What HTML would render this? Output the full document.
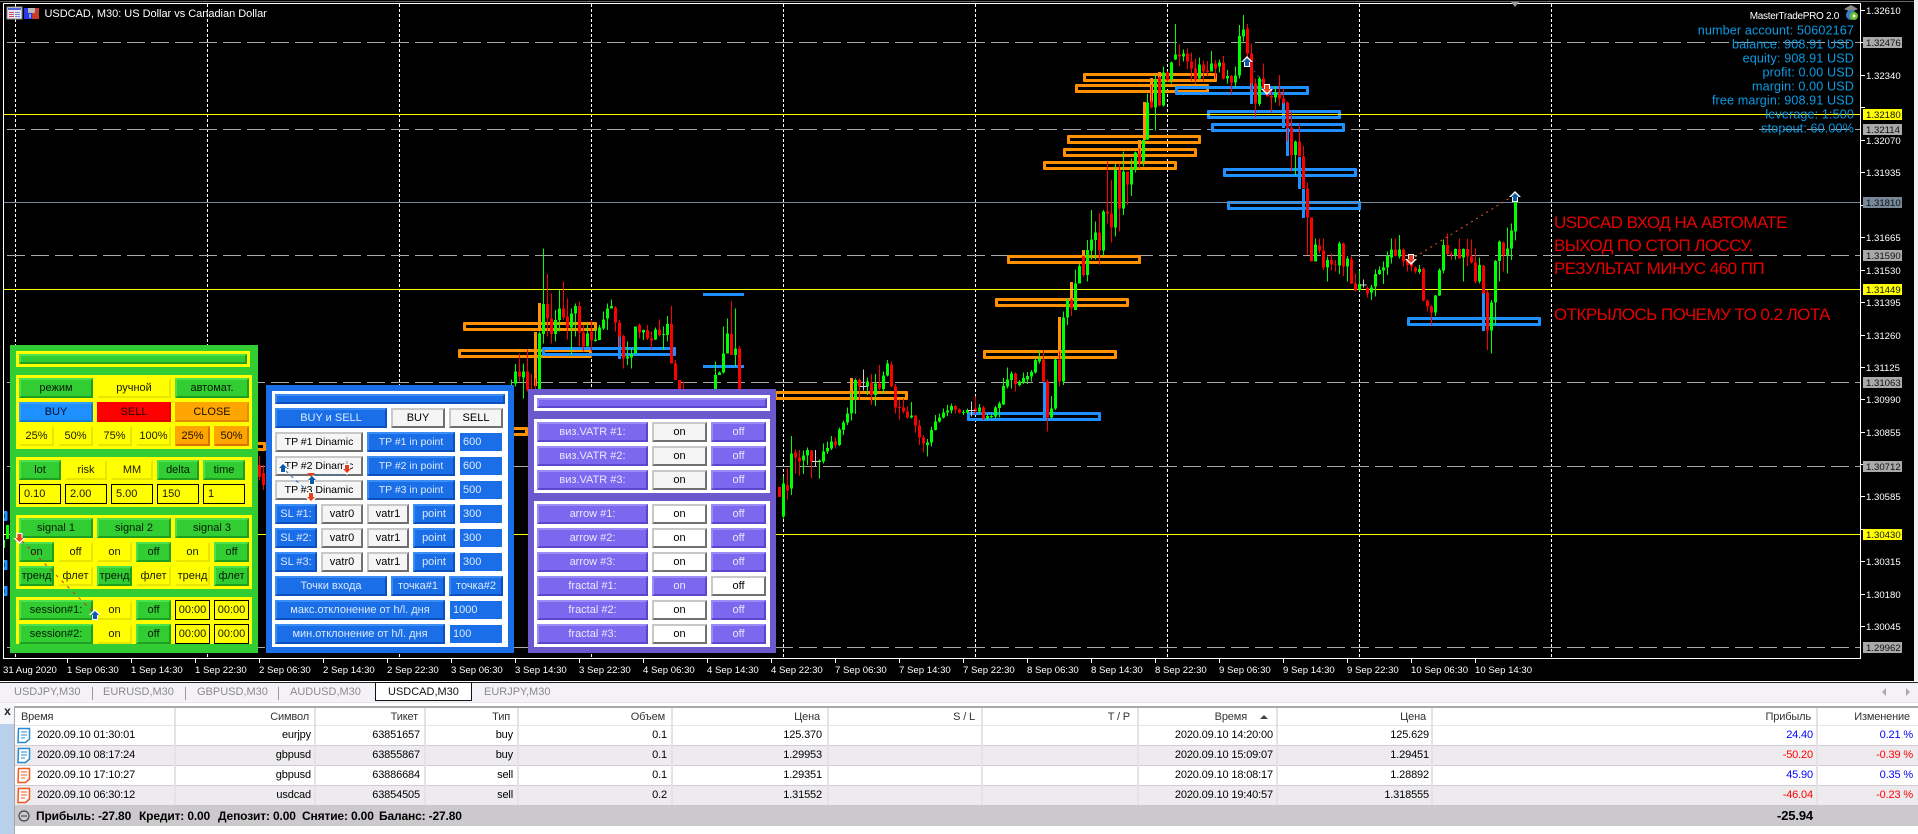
<!DOCTYPE html>
<html><head><meta charset="utf-8"><title>USDCAD,M30</title>
<style>
html,body{margin:0;padding:0;width:1918px;height:834px;overflow:hidden;background:#fff;font-family:"Liberation Sans","Noto Sans CJK SC",sans-serif}
.a{position:absolute}
svg{position:absolute;left:0;top:0}
svg text{font-family:"Liberation Sans","Noto Sans CJK SC",sans-serif}
.b{position:absolute;box-sizing:border-box;border-style:solid;border-width:2px;height:20px;font-size:11px;line-height:16px;text-align:center;white-space:nowrap;overflow:hidden;color:#000}
.tp{font-size:10.5px}
.g{background:#32cd32;border-color:#4be24b #1f9f1f #1f9f1f #4be24b;color:#041a04}
.y{background:#ff0;border-color:#ff0 #e6e600 #e6e600 #ff0;color:#1a1a00}
.bu{background:#1e90ff;border-color:#35a0ff #1878d8 #1878d8 #35a0ff;color:#00102a}
.r{background:#f00;border-color:#f00 #e00000 #e00000 #f00;color:#200}
.o{background:#ffa500;border-color:#ffa500 #e68a00 #e68a00 #ffa500;color:#201000}
.o2{background:#ffa500;border-color:#ffa500 #e07000 #e07000 #ffa500;color:#201000}
.e{position:absolute;box-sizing:border-box;border:1px solid #000;background:#ff0;height:20px;font-size:11px;line-height:18px;color:#1a1a00;white-space:nowrap}
.w{background:#f5f5f5;border-color:#c8c8c8 #707070 #707070 #c8c8c8}
.wh{background:#fff;border-color:#c8c8c8 #707070 #707070 #c8c8c8}
.u{background:#1a6fe8;border-color:#3b8cf5 #0a50c0 #0a50c0 #3b8cf5;color:#dbe9ff}
.ue{position:absolute;box-sizing:border-box;background:#1a6fe8;height:18px;font-size:11px;line-height:18px;color:#dbe9ff;padding-left:3px;white-space:nowrap}
.p{background:#7b68ee;border-color:#9a8cf7 #5a46cf #5a46cf #9a8cf7;color:#ebe7ff}
.row{position:absolute;left:15px;width:1903px;height:20px;font-size:11px;line-height:20px;color:#000}
.row span{position:absolute;top:0;white-space:nowrap;letter-spacing:-.15px}
.cs{position:absolute;width:2px;background:#e4e2e6}
.tb{position:absolute;top:685px;font-size:11px;line-height:14px;color:#8a8a8a;white-space:nowrap}
</style></head><body>

<svg width="1918" height="684" viewBox="0 0 1918 684">
<defs>
<clipPath id="pl"><rect x="4" y="4" width="1856" height="654"/></clipPath>
<g id="au"><polygon points="0,-6 6,0 3,0 3,5 -3,5 -3,0 -6,0" fill="#fff"/><polygon points="0,-4 4,0 2,0 2,4 -2,4 -2,0 -4,0" fill="#0b5aa8"/></g>
<g id="ad"><polygon points="0,6 6,0 3,0 3,-5 -3,-5 -3,0 -6,0" fill="#fff"/><polygon points="0,4 4,0 2,0 2,-4 -2,-4 -2,0 -4,0" fill="#e8401c"/></g>
</defs>
<rect width="1918" height="681" fill="#000"/>
<rect x="0" y="1" width="1914" height="1" fill="#666"/>
<g clip-path="url(#pl)" shape-rendering="crispEdges">
<path fill="none" stroke="#fff" stroke-dasharray="3 2" d="M15.5 4V658M207.5 4V658M399.5 4V658M591.5 4V658M783.5 4V658M975.5 4V658M1167.5 4V658M1359.5 4V658M1551.5 4V658"/>
<path fill="none" stroke="#a6a6a6" stroke-dasharray="18 6" stroke-dashoffset="-3" d="M4 42.5H1860M4 129.5H1860M4 255.5H1860M4 382.5H1860M4 466.5H1860M4 647.5H1860"/>
<g fill="none" stroke="#ff9000" stroke-width="3" stroke-linejoin="round">
<rect x="1084.5" y="74.5" width="131" height="6"/><rect x="1076.5" y="85.5" width="131" height="6"/><rect x="1068.5" y="136.5" width="131" height="6"/><rect x="1064.5" y="149.5" width="131" height="6"/><rect x="1044.5" y="162.5" width="131" height="6"/><rect x="1008.5" y="256.5" width="131" height="6"/><rect x="996.5" y="299.5" width="131" height="6"/><rect x="984.5" y="351.5" width="131" height="6"/><rect x="775.5" y="392.5" width="131" height="6"/><rect x="464.5" y="323.5" width="131" height="6"/><rect x="459.5" y="350.5" width="131" height="6"/><rect x="395.5" y="428.5" width="131" height="6"/><rect x="133.5" y="443.5" width="131" height="6"/>
<path d="M1144.5 102V140M1139.5 140V163M1151.5 78V106M1159.5 72V82M1083.5 250V275M1071.5 282V308M1059.5 317V358M851.5 378V400M539.5 303V331M535.5 332V386"/>
</g>
<g fill="none" stroke="#1e90ff" stroke-width="3" stroke-linejoin="round">
<rect x="1176.5" y="87.5" width="131" height="6"/><rect x="1208.5" y="111.5" width="131" height="6"/><rect x="1212.5" y="124.5" width="131" height="6"/><rect x="1224.5" y="169.5" width="131" height="6"/><rect x="1228.5" y="202.5" width="131" height="6"/><rect x="1408.5" y="318.5" width="131" height="6"/><rect x="968.5" y="413.5" width="131" height="6"/><rect x="543.5" y="348.5" width="131" height="6"/>
<rect x="-125" y="512.5" width="131" height="7"/><rect x="-125" y="561.5" width="131" height="7"/><rect x="-125" y="587.5" width="131" height="7"/>
<path d="M703 294.5H744M703 366.5H744M1044.5 382V420M1251.5 83V104M1283.5 102V128M1287.5 128V156M1299.5 157V189M1303.5 189V218M1483.5 292V331M619.5 335V359"/>
</g>
<path fill="none" stroke="#ff0" d="M4 114.5H1860M4 289.5H1860M4 534.5H1860"/>
<path fill="none" stroke="#778899" d="M4 202.5H1860"/>

<!-- candles region 1 -->
<g transform="translate(440 240) scale(.33333)" fill="none">
<path stroke="#0f0" stroke-width="3" d="M214 418V435M226 372V440M250 370V475M298 275V450M310 25V310M346 210V305M358 150V275M394 205V345M406 190V290M442 250V320M466 265V305M478 255V300M490 215V270M502 190V270M514 178V205M562 305V375M574 325V385M586 260V340M610 268V300M646 262V300M670 260V330M682 228V305M826 365V470M838 395V405M850 260V400M862 235V340M886 205V380"/>
<path stroke="#0f0" stroke-width="9" d="M226 395V430M250 395V412M298 280V450M310 192V282M346 240V282M358 205V240M394 220V262M406 198V220M442 280V320M466 298V303M478 262V300M490 238V266M502 205V236M514 198V205M562 350V355M574 342V352M586 260V340M610 270V278M646 268V298M670 282V285M682 252V285M826 405V460M838 398V405M850 340V397M862 280V340M886 325V345"/>
<path stroke="#f00" stroke-width="3" d="M238 340V425M262 328V455M274 402V450M286 415V450M322 102V290M334 160V310M370 124V240M382 175V298M418 185V320M430 255V335M454 240V335M526 198V275M538 240V320M550 285V385M598 250V295M622 255V300M634 275V325M658 238V290M694 198V370M706 360V420M718 420V460M730 425V460M874 183V345M898 318V450"/>
<path stroke="#f00" stroke-width="9" d="M238 395V410M262 395V450M322 192V235M334 235V282M370 205V232M382 230V262M418 198V278M430 278V320M454 275V302M526 202V248M538 248V290M550 288V355M598 255V278M622 270V295M634 295V302M658 268V285M694 252V370M706 370V420M718 420V460M874 282V345M898 325V450"/>
</g>

<!-- candles region 2 -->
<g transform="translate(780 200) scale(.33333)" fill="none">
<path stroke="#0f0" stroke-width="3" d="M10 830V955M34 708V885M70 752V822M82 742V795M118 778V835M130 730V790M142 725V762M154 708V750M178 682V738M190 662V705M202 622V675M214 578V662M226 535V642M262 532V585M286 522V618M310 515V582M322 480V530M394 606V655M442 717V770M454 680V740M466 645V692M478 640V668M490 625V655M502 615V648M514 610V640M550 630V645M562 625V642M598 612V640M622 640V660M634 640V655M646 618V655M658 605V652M670 534V615M682 502V565M694 515V565M718 540V560M730 518V552M742 516V552M754 510V545M766 475V520M778 450V490M814 588V655M826 475V630M850 335V555M862 295V375"/>
<path stroke="#0f0" stroke-width="9" d="M10 850V950M34 760V866M70 766V782M82 750V766M118 782V786M130 754V785M142 744V755M154 724V746M178 688V735M190 667V690M202 640V668M214 600V640M226 540V598M262 545V560M286 550V585M310 526V567M322 490V527M394 646V653M442 727V735M454 690V728M466 664V690M478 652V665M490 637V652M502 632V638M514 618V632M550 636V639M562 630V638M598 622V634M622 648V656M634 648V651M646 622V650M658 610V624M670 558V614M682 538V560M694 520V540M718 545V555M730 534V548M742 528V538M754 516V530M766 480V518M778 476V484M814 625V652M826 478V626M850 352V545M862 300V352"/>
<path stroke="#f00" stroke-width="3" d="M22 805V900M46 748V820M58 750V828M94 750V835M166 712V745M238 535V600M274 522V615M298 495V570M334 485V562M346 552V640M358 598V660M370 595V640M382 620V655M406 645V698M418 660V735M430 705V758M526 615V640M538 625V640M586 590V642M610 618V660M706 518V575M790 450V545M802 538V695M838 455V560M874 295V348"/>
<path stroke="#f00" stroke-width="9" d="M22 858V872M46 757V772M58 772V785M94 752V785M166 724V735M238 540V560M274 548V585M298 550V565M334 493V560M346 560V622M358 621V624M370 622V635M382 635V652M406 647V676M418 676V712M430 712V731M526 618V628M538 628V638M586 625V634M610 622V656M706 520V552M790 478V545M802 545V652M838 478V545M874 300V325"/>
<path stroke="#cfcfcf" stroke-width="3" d="M106 750V800M250 508V572M574 605V650M96 784H118M240 560H262M564 632H586"/>
</g>

<!-- candles region 3 -->
<g transform="translate(1000 0) scale(.33333)" fill="none">
<path stroke="#0f0" stroke-width="3" d="M226 808V930M238 792V850M262 720V845M274 630V778M286 665V778M310 630V768M346 492V710M370 455V645M394 475V588M406 455V518M430 418V500M442 280V420M466 225V392M490 200V320M514 185V250M526 72V180M550 148V185M598 172V238M634 153V215M658 178V218M682 210V250M706 200V262M718 75V235M730 45V125M778 230V318M826 258V308M886 422V525M946 716V785M982 770V845M1018 725V822M1042 768V845M1078 812V872M1114 855V900M1126 808V890M1138 800V825M1150 785V852M1162 755V825M1174 715V790M1198 705V775"/>
<path stroke="#0f0" stroke-width="9" d="M226 850V930M238 798V850M262 750V825M274 718V752M286 697V720M310 634V752M346 510V683M370 515V625M394 505V553M406 458V508M430 420V485M442 308V418M466 238V322M490 218V316M514 188V238M526 163V178M550 160V170M598 193V236M634 190V215M658 187V200M682 228V236M706 226V248M718 108V226M730 88V110M778 235V312M826 278V292M886 425V465M946 733V785M982 780V802M1018 730V796M1042 775V800M1078 852V870M1114 862V878M1126 822V860M1138 810V822M1150 802V812M1162 768V803M1174 748V772M1198 748V770"/>
<path stroke="#f00" stroke-width="3" d="M250 768V830M298 640V795M322 485V670M334 540V728M358 492V695M382 515V615M418 445V505M454 255V325M478 230V320M502 215V245M538 133V198M562 145V208M574 157V243M586 175V252M610 182V245M622 183V230M646 180V235M670 168V238M694 225V282M742 72V180M754 130V272M766 235V352M790 190V265M802 260V290M814 268V338M838 225V318M850 265V312M862 305V425M874 335V515M898 370V470M910 438V565M922 547V765M934 652V785M958 715V760M970 715V810M994 760V812M1006 780V815M1030 728V828M1054 770V852M1066 820V875M1102 860V892M1186 715V770"/>
<path stroke="#f00" stroke-width="9" d="M250 770V825M298 697V752M322 635V640M334 640V682M358 510V625M382 515V553M418 460V485M454 305V322M478 232V316M502 218V240M538 163V170M562 160V185M574 185V205M586 205V238M610 193V215M622 212V216M646 190V205M670 187V236M694 228V248M742 85V160M754 160V250M766 250V310M790 235V265M802 282V290M814 288V292M838 278V296M850 295V308M862 308V382M874 382V465M898 425V470M910 470V565M922 565V652M934 652V785M958 737V752M970 752V802M994 780V793M1006 793V795M1030 730V800M1054 778V850M1066 850V872M1102 864V880M1186 748V768"/>
<path stroke="#cfcfcf" stroke-width="3" d="M1090 838V862M1080 855H1100"/>
</g>

<!-- candles region 4 -->
<g transform="translate(1400 180) scale(.33333)" fill="none">
<path stroke="#0f0" stroke-width="3" d="M58 255V282M106 345V408M118 265V348M130 178V280M166 205V238M190 205V305M238 232V310M274 360V520M286 240V435M298 182V305M322 142V280M334 130V240M346 50V182"/>
<path stroke="#0f0" stroke-width="9" d="M58 267V276M106 347V398M118 270V347M130 195V272M166 207V225M190 207V232M238 255V305M274 367V452M286 243V367M298 185V243M322 205V225M334 152V205M346 65V155"/>
<path stroke="#f00" stroke-width="3" d="M10 205V260M22 240V275M34 245V275M46 260V280M70 262V365M82 358V395M94 375V435M142 160V225M154 215V240M178 175V235M202 175V258M214 178V250M226 205V310M250 255V340M262 330V510M310 185V275"/>
<path stroke="#f00" stroke-width="9" d="M10 208V245M22 243V255M34 250V260M46 262V275M70 265V362M82 362V380M94 380V398M142 195V222M154 222V225M178 207V235M202 207V230M214 230V248M226 248V305M250 257V340M262 338V452M310 187V225"/>
</g>

<!-- candles in gaps -->
<path fill="none" stroke="#f00" d="M259.5 456V480M263.5 465V490"/>
<path fill="none" stroke="#f00" stroke-width="3" d="M259.5 465V477M263.5 473V485M779.5 487V497M787.5 485V490"/>
<path fill="none" stroke="#0f0" stroke-width="3" d="M7.5 525V539"/>
<path fill="none" stroke="#0f0" d="M4.5 540V548"/>
</g>

<!-- trade lines and arrows -->
<path fill="none" stroke="#e8602c" stroke-dasharray="2 4" d="M1415 257L1513 196"/>
<path fill="none" stroke="#1572c8" stroke-dasharray="2 4" d="M1250 66L1266 86"/>
<use href="#au" x="1247" y="62"/><use href="#ad" x="1267" y="89"/><use href="#ad" x="1411" y="259"/><use href="#au" x="1515" y="197"/>

<!-- axis -->
<g shape-rendering="crispEdges">
<rect x="3" y="3" width="1858" height="1" fill="#fff"/>
<rect x="3" y="3" width="1" height="656" fill="#fff"/>
<rect x="3" y="658" width="1858" height="1" fill="#fff"/>
<rect x="1860" y="3" width="1" height="656" fill="#fff"/>
<path stroke="#fff" fill="none" d="M1861 10.5H1865M1861 42.5H1865M1861 75.5H1865M1861 107.5H1865M1861 140.5H1865M1861 172.5H1865M1861 205.5H1865M1861 237.5H1865M1861 270.5H1865M1861 302.5H1865M1861 335.5H1865M1861 367.5H1865M1861 399.5H1865M1861 432.5H1865M1861 464.5H1865M1861 496.5H1865M1861 529.5H1865M1861 561.5H1865M1861 594.5H1865M1861 626.5H1865M67.5 659V663M131.5 659V663M195.5 659V663M259.5 659V663M323.5 659V663M387.5 659V663M451.5 659V663M515.5 659V663M579.5 659V663M643.5 659V663M707.5 659V663M771.5 659V663M835.5 659V663M899.5 659V663M963.5 659V663M1027.5 659V663M1091.5 659V663M1155.5 659V663M1219.5 659V663M1283.5 659V663M1347.5 659V663M1411.5 659V663M1475.5 659V663"/>
<rect x="1863" y="37" width="39" height="11" fill="#a9a9a9"/>
<rect x="1863" y="109" width="39" height="11" fill="#ff0"/>
<rect x="1863" y="124" width="39" height="11" fill="#a9a9a9"/>
<rect x="1863" y="197" width="39" height="11" fill="#778899"/>
<rect x="1863" y="250" width="39" height="11" fill="#a9a9a9"/>
<rect x="1863" y="284" width="39" height="11" fill="#ff0"/>
<rect x="1863" y="377" width="39" height="11" fill="#a9a9a9"/>
<rect x="1863" y="461" width="39" height="11" fill="#a9a9a9"/>
<rect x="1863" y="529" width="39" height="11" fill="#ff0"/>
<rect x="1863" y="642" width="39" height="11" fill="#a9a9a9"/>
</g>
<g font-size="9.6" fill="#fff">
<text x="1866" y="14">1.32610</text><text x="1866" y="79">1.32340</text><text x="1866" y="144">1.32070</text><text x="1866" y="176">1.31935</text><text x="1866" y="241">1.31665</text><text x="1866" y="274">1.31530</text><text x="1866" y="306">1.31395</text><text x="1866" y="339">1.31260</text><text x="1866" y="371">1.31125</text><text x="1866" y="403">1.30990</text><text x="1866" y="436">1.30855</text><text x="1866" y="500">1.30585</text><text x="1866" y="565">1.30315</text><text x="1866" y="598">1.30180</text><text x="1866" y="630">1.30045</text>
</g>
<g font-size="9.6" fill="#111">
<text x="1866" y="46">1.32476</text><text x="1866" y="118">1.32180</text><text x="1866" y="133">1.32114</text><text x="1866" y="206">1.31810</text><text x="1866" y="259">1.31590</text><text x="1866" y="293">1.31449</text><text x="1866" y="386">1.31063</text><text x="1866" y="470">1.30712</text><text x="1866" y="538">1.30430</text><text x="1866" y="651">1.29962</text>
</g>
<g font-size="9.6" fill="#fff">
<text x="3" y="673">31 Aug 2020</text><text x="67" y="673">1 Sep 06:30</text><text x="131" y="673">1 Sep 14:30</text><text x="195" y="673">1 Sep 22:30</text><text x="259" y="673">2 Sep 06:30</text><text x="323" y="673">2 Sep 14:30</text><text x="387" y="673">2 Sep 22:30</text><text x="451" y="673">3 Sep 06:30</text><text x="515" y="673">3 Sep 14:30</text><text x="579" y="673">3 Sep 22:30</text><text x="643" y="673">4 Sep 06:30</text><text x="707" y="673">4 Sep 14:30</text><text x="771" y="673">4 Sep 22:30</text><text x="835" y="673">7 Sep 06:30</text><text x="899" y="673">7 Sep 14:30</text><text x="963" y="673">7 Sep 22:30</text><text x="1027" y="673">8 Sep 06:30</text><text x="1091" y="673">8 Sep 14:30</text><text x="1155" y="673">8 Sep 22:30</text><text x="1219" y="673">9 Sep 06:30</text><text x="1283" y="673">9 Sep 14:30</text><text x="1347" y="673">9 Sep 22:30</text><text x="1411" y="673">10 Sep 06:30</text><text x="1475" y="673">10 Sep 14:30</text>
</g>

<!-- title -->
<g shape-rendering="crispEdges">
<rect x="7" y="7" width="15" height="12" fill="#e8e8f4" stroke="#888"/><rect x="8" y="8" width="13" height="2" fill="#5060d8"/><path stroke="#e04848" d="M9 12.5H14M9 14.5H14M9 16.5H14"/><path stroke="#7088e0" d="M15 12.5H20M15 14.5H20M15 16.5H20"/>
<rect x="24" y="8" width="8" height="11" fill="#2a38e8"/><rect x="32" y="8" width="7" height="11" fill="#c83a2a"/><rect x="28" y="8" width="7" height="5" fill="#b8b8b8"/><rect x="29" y="14" width="2" height="4" fill="#8898f0"/>
</g>
<text x="44.5" y="17" font-size="11" fill="#fff" letter-spacing="-.02">USDCAD, M30:  US Dollar vs Canadian Dollar</text>
<polygon points="1511,2 1519,2 1515,7" fill="#999"/>

<!-- account info -->
<text x="1839" y="19" font-size="10" fill="#fff" text-anchor="end" letter-spacing="-.3">MasterTradePRO 2.0</text>
<polygon points="1844,9 1851,5 1858,9 1851,12" fill="#8a8a8a"/><circle cx="1851" cy="15" r="5" fill="#3a7fc0"/><circle cx="1854" cy="16" r="4" fill="#6cbf2a"/><polygon points="1853,14 1853,18 1856,16" fill="#fff"/>
<g font-size="12.6" fill="#0a9be4" text-anchor="end" letter-spacing=".12">
<text x="1854" y="34.5">number account: 50602167</text>
<text x="1854" y="48.5">balance: 908.91 USD</text>
<text x="1854" y="62.5">equity: 908.91 USD</text>
<text x="1854" y="76.5">profit: 0.00 USD</text>
<text x="1854" y="90.5">margin: 0.00 USD</text>
<text x="1854" y="104.5">free margin: 908.91 USD</text>
<text x="1854" y="118.5">leverage: 1:500</text>
<text x="1854" y="132.5">stopout: 60.00%</text>
</g>
<!-- annotation -->
<g font-size="17" fill="#e60000" letter-spacing="-.55">
<text x="1554" y="228">USDCAD ВХОД НА АВТОМАТЕ</text>
<text x="1554" y="251">ВЫХОД ПО СТОП ЛОССУ.</text>
<text x="1554" y="274">РЕЗУЛЬТАТ МИНУС 460 ПП</text>
<text x="1554" y="320">ОТКРЫЛОСЬ ПОЧЕМУ ТО 0.2 ЛОТА</text>
</g>
</svg>

<!-- GREEN PANEL -->
<div class="a" style="left:10px;top:345px;width:248px;height:308px;background:#32cd32"></div>
<div class="a" style="left:16px;top:351px;width:234px;height:16px;background:#ff0"></div>
<div class="b g" style="left:19px;top:354px;width:228px;height:10px"></div>
<div class="a" style="left:16px;top:375px;width:236px;height:74px;background:#ff0"></div>
<div class="a" style="left:16px;top:457px;width:236px;height:50px;background:#ff0"></div>
<div class="a" style="left:16px;top:515px;width:236px;height:74px;background:#ff0"></div>
<div class="a" style="left:16px;top:597px;width:236px;height:47px;background:#ff0"></div>
<div class="b g" style="left:19px;top:378px;width:74px">режим</div>
<div class="b y" style="left:97px;top:378px;width:74px">ручной</div>
<div class="b g" style="left:175px;top:378px;width:74px">автомат.</div>
<div class="b bu" style="left:19px;top:402px;width:74px">BUY</div>
<div class="b r" style="left:97px;top:402px;width:74px">SELL</div>
<div class="b o" style="left:175px;top:402px;width:74px">CLOSE</div>
<div class="b y" style="left:19px;top:426px;width:35px">25%</div>
<div class="b y" style="left:58px;top:426px;width:35px">50%</div>
<div class="b y" style="left:97px;top:426px;width:35px">75%</div>
<div class="b y" style="left:136px;top:426px;width:35px">100%</div>
<div class="b o2" style="left:175px;top:426px;width:35px">25%</div>
<div class="b o2" style="left:214px;top:426px;width:35px">50%</div>
<div class="b g" style="left:19px;top:460px;width:42px">lot</div>
<div class="b y" style="left:65px;top:460px;width:42px">risk</div>
<div class="b y" style="left:111px;top:460px;width:42px">MM</div>
<div class="b g" style="left:157px;top:460px;width:42px">delta</div>
<div class="b g" style="left:203px;top:460px;width:42px">time</div>
<div class="e" style="left:19px;top:484px;width:42px;padding-left:4px">0.10</div>
<div class="e" style="left:65px;top:484px;width:42px;padding-left:4px">2.00</div>
<div class="e" style="left:111px;top:484px;width:42px;padding-left:4px">5.00</div>
<div class="e" style="left:157px;top:484px;width:42px;padding-left:4px">150</div>
<div class="e" style="left:203px;top:484px;width:42px;padding-left:4px">1</div>
<div class="b g" style="left:19px;top:518px;width:74px">signal 1</div>
<div class="b g" style="left:97px;top:518px;width:74px">signal 2</div>
<div class="b g" style="left:175px;top:518px;width:74px">signal 3</div>
<div class="b g" style="left:19px;top:542px;width:35px">on</div>
<div class="b y" style="left:58px;top:542px;width:35px">off</div>
<div class="b y" style="left:97px;top:542px;width:35px">on</div>
<div class="b g" style="left:136px;top:542px;width:35px">off</div>
<div class="b y" style="left:175px;top:542px;width:35px">on</div>
<div class="b g" style="left:214px;top:542px;width:35px">off</div>
<div class="b g" style="left:19px;top:566px;width:35px">тренд</div>
<div class="b y" style="left:58px;top:566px;width:35px">флет</div>
<div class="b g" style="left:97px;top:566px;width:35px">тренд</div>
<div class="b y" style="left:136px;top:566px;width:35px">флет</div>
<div class="b y" style="left:175px;top:566px;width:35px">тренд</div>
<div class="b g" style="left:214px;top:566px;width:35px">флет</div>
<div class="b g" style="left:19px;top:600px;width:74px">session#1:</div>
<div class="b y" style="left:97px;top:600px;width:35px">on</div>
<div class="b g" style="left:136px;top:600px;width:35px">off</div>
<div class="e" style="left:175px;top:600px;width:35px;text-align:center">00:00</div>
<div class="e" style="left:214px;top:600px;width:35px;text-align:center">00:00</div>
<div class="b g" style="left:19px;top:624px;width:74px">session#2:</div>
<div class="b y" style="left:97px;top:624px;width:35px">on</div>
<div class="b g" style="left:136px;top:624px;width:35px">off</div>
<div class="e" style="left:175px;top:624px;width:35px;text-align:center">00:00</div>
<div class="e" style="left:214px;top:624px;width:35px;text-align:center">00:00</div>

<!-- BLUE PANEL -->
<div class="a" style="left:266px;top:385px;width:248px;height:268px;background:#1a6fe8"></div>
<div class="a" style="left:272px;top:391px;width:236px;height:256px;background:#fff"></div>
<div class="b u" style="left:275px;top:394px;width:230px;height:10px"></div>
<div class="b u" style="left:275px;top:408px;width:112px">BUY и SELL</div>
<div class="b w" style="left:391px;top:408px;width:54px">BUY</div>
<div class="b w" style="left:449px;top:408px;width:54px">SELL</div>
<div class="b w tp" style="left:275px;top:432px;width:88px">TP #1 Dinamic</div>
<div class="b u tp" style="left:367px;top:432px;width:88px">TP #1 in point</div>
<div class="ue" style="left:460px;top:433px;width:42px">600</div>
<div class="b w tp" style="left:275px;top:456px;width:88px">TP #2 Dinamic</div>
<div class="b u tp" style="left:367px;top:456px;width:88px">TP #2 in point</div>
<div class="ue" style="left:460px;top:457px;width:42px">600</div>
<div class="b w tp" style="left:275px;top:480px;width:88px">TP #3 Dinamic</div>
<div class="b u tp" style="left:367px;top:480px;width:88px">TP #3 in point</div>
<div class="ue" style="left:460px;top:481px;width:42px">500</div>
<div class="b u" style="left:275px;top:504px;width:42px">SL #1:</div>
<div class="b w" style="left:321px;top:504px;width:42px">vatr0</div>
<div class="b w" style="left:367px;top:504px;width:42px">vatr1</div>
<div class="b u" style="left:413px;top:504px;width:42px">point</div>
<div class="ue" style="left:460px;top:505px;width:42px">300</div>
<div class="b u" style="left:275px;top:528px;width:42px">SL #2:</div>
<div class="b w" style="left:321px;top:528px;width:42px">vatr0</div>
<div class="b w" style="left:367px;top:528px;width:42px">vatr1</div>
<div class="b u" style="left:413px;top:528px;width:42px">point</div>
<div class="ue" style="left:460px;top:529px;width:42px">300</div>
<div class="b u" style="left:275px;top:552px;width:42px">SL #3:</div>
<div class="b w" style="left:321px;top:552px;width:42px">vatr0</div>
<div class="b w" style="left:367px;top:552px;width:42px">vatr1</div>
<div class="b u" style="left:413px;top:552px;width:42px">point</div>
<div class="ue" style="left:460px;top:553px;width:42px">300</div>
<div class="b u" style="left:275px;top:576px;width:112px">Точки входа</div>
<div class="b u" style="left:391px;top:576px;width:54px">точка#1</div>
<div class="b u" style="left:449px;top:576px;width:54px">точка#2</div>
<div class="b u" style="left:275px;top:600px;width:170px">макс.отклонение от h/l. дня</div>
<div class="ue" style="left:450px;top:601px;width:52px">1000</div>
<div class="b u" style="left:275px;top:624px;width:170px">мин.отклонение от h/l. дня</div>
<div class="ue" style="left:450px;top:625px;width:52px">100</div>

<!-- PURPLE PANEL -->
<div class="a" style="left:528px;top:389px;width:248px;height:264px;background:#6a5acd"></div>
<div class="a" style="left:534px;top:395px;width:236px;height:16px;background:#fff"></div>
<div class="b p" style="left:537px;top:398px;width:230px;height:10px"></div>
<div class="a" style="left:534px;top:419px;width:236px;height:74px;background:#fff"></div>
<div class="a" style="left:534px;top:501px;width:236px;height:146px;background:#fff"></div>
<div class="b p" style="left:537px;top:422px;width:111px">виз.VATR #1:</div>
<div class="b w" style="left:652px;top:422px;width:55px">on</div>
<div class="b p" style="left:711px;top:422px;width:55px">off</div>
<div class="b p" style="left:537px;top:446px;width:111px">виз.VATR #2:</div>
<div class="b w" style="left:652px;top:446px;width:55px">on</div>
<div class="b p" style="left:711px;top:446px;width:55px">off</div>
<div class="b p" style="left:537px;top:470px;width:111px">виз.VATR #3:</div>
<div class="b w" style="left:652px;top:470px;width:55px">on</div>
<div class="b p" style="left:711px;top:470px;width:55px">off</div>
<div class="b p" style="left:537px;top:504px;width:111px">arrow #1:</div>
<div class="b wh" style="left:652px;top:504px;width:55px">on</div>
<div class="b p" style="left:711px;top:504px;width:55px">off</div>
<div class="b p" style="left:537px;top:528px;width:111px">arrow #2:</div>
<div class="b wh" style="left:652px;top:528px;width:55px">on</div>
<div class="b p" style="left:711px;top:528px;width:55px">off</div>
<div class="b p" style="left:537px;top:552px;width:111px">arrow #3:</div>
<div class="b wh" style="left:652px;top:552px;width:55px">on</div>
<div class="b p" style="left:711px;top:552px;width:55px">off</div>
<div class="b p" style="left:537px;top:576px;width:111px">fractal #1:</div>
<div class="b p" style="left:652px;top:576px;width:55px">on</div>
<div class="b wh" style="left:711px;top:576px;width:55px">off</div>
<div class="b p" style="left:537px;top:600px;width:111px">fractal #2:</div>
<div class="b wh" style="left:652px;top:600px;width:55px">on</div>
<div class="b p" style="left:711px;top:600px;width:55px">off</div>
<div class="b p" style="left:537px;top:624px;width:111px">fractal #3:</div>
<div class="b wh" style="left:652px;top:624px;width:55px">on</div>
<div class="b p" style="left:711px;top:624px;width:55px">off</div>

<!-- overlay arrows on panels -->
<svg width="1918" height="684" viewBox="0 0 1918 684" style="pointer-events:none">
<path fill="none" stroke="#d03020" stroke-dasharray="3 5" d="M22 541L93 612"/>
<path fill="none" stroke="#1572c8" stroke-dasharray="3 4" d="M286 471L306 490M315 475H345"/>
<use href="#ad" x="19.5" y="538"/><use href="#au" x="95" y="615"/>
<use href="#au" x="283" y="468"/><use href="#au" x="312" y="480"/><use href="#ad" x="347" y="469"/><use href="#ad" x="311" y="497"/>
<polygon points="307,473 315,473 311,477" fill="#e8401c"/>
</svg>

<!-- WINDOW EDGE -->
<div class="a" style="left:1914px;top:0;width:4px;height:682px;background:#f0f0f0"></div>
<div class="a" style="left:0;top:681px;width:1918px;height:1px;background:#fff"></div>
<div class="a" style="left:0;top:682px;width:1918px;height:1px;background:#222"></div>

<!-- TABS -->
<div class="a" style="left:0;top:683px;width:1918px;height:19px;background:#f5f2f7"></div>
<div class="a" style="left:0;top:702px;width:1918px;height:4px;background:#fff"></div>
<div class="a" style="left:0;top:702px;width:1918px;height:1px;background:#e6e4e8"></div>
<div class="a" style="left:92px;top:687px;width:1px;height:13px;background:#999"></div>
<div class="a" style="left:185px;top:687px;width:1px;height:13px;background:#999"></div>
<div class="a" style="left:278px;top:687px;width:1px;height:13px;background:#999"></div>
<div class="tb" style="left:14px">USDJPY,M30</div>
<div class="tb" style="left:103px">EURUSD,M30</div>
<div class="tb" style="left:197px">GBPUSD,M30</div>
<div class="tb" style="left:290px">AUDUSD,M30</div>
<div class="a" style="left:375px;top:682px;width:97px;height:19px;box-sizing:border-box;background:#fff;border:1px solid #111"></div>
<div class="tb" style="left:388px;color:#111">USDCAD,M30</div>
<div class="tb" style="left:484px">EURJPY,M30</div>
<svg width="1918" height="834" viewBox="0 0 1918 834" style="pointer-events:none">
<polygon points="1886,688 1882,692 1886,696" fill="#aaa"/><polygon points="1906,688 1910,692 1906,696" fill="#aaa"/>
</svg>

<!-- TERMINAL -->
<div class="a" style="left:0;top:703px;width:14px;height:131px;background:#b9d0ea"></div>
<div class="a" style="left:0;top:703px;width:14px;height:21px;background:#f4f6fa"></div>
<div class="a" style="left:2px;top:704px;width:11px;font-size:12px;font-weight:bold;line-height:14px;text-align:center;color:#222">x</div>
<div class="a" style="left:14px;top:706px;width:1px;height:128px;background:#a8a8a8"></div>
<div class="a" style="left:14px;top:706px;width:1904px;height:2px;background:#a8a8a8"></div>
<div class="a" style="left:15px;top:708px;width:1903px;height:17px;background:#fff"></div>
<div class="a" style="left:15px;top:725px;width:1903px;height:20px;background:#fff"></div>
<div class="a" style="left:15px;top:745px;width:1903px;height:1px;background:#cfcdd0"></div>
<div class="a" style="left:15px;top:746px;width:1903px;height:19px;background:#edebee"></div>
<div class="a" style="left:15px;top:765px;width:1903px;height:1px;background:#cfcdd0"></div>
<div class="a" style="left:15px;top:766px;width:1903px;height:19px;background:#fff"></div>
<div class="a" style="left:15px;top:785px;width:1903px;height:1px;background:#cfcdd0"></div>
<div class="a" style="left:15px;top:786px;width:1903px;height:19px;background:#edebee"></div>
<div class="a" style="left:15px;top:805px;width:1903px;height:21px;background:#cbc9cc"></div>
<div class="a" style="left:15px;top:725px;width:1903px;height:1px;background:#e8e6ea"></div>
<div class="cs" style="left:174px;top:708px;height:97px"></div>
<div class="cs" style="left:314px;top:708px;height:97px"></div>
<div class="cs" style="left:424px;top:708px;height:97px"></div>
<div class="cs" style="left:517px;top:708px;height:97px"></div>
<div class="cs" style="left:671px;top:708px;height:97px"></div>
<div class="cs" style="left:827px;top:708px;height:97px"></div>
<div class="cs" style="left:981px;top:708px;height:97px"></div>
<div class="cs" style="left:1137px;top:708px;height:97px"></div>
<div class="cs" style="left:1276px;top:708px;height:97px"></div>
<div class="cs" style="left:1431px;top:708px;height:97px"></div>
<div class="cs" style="left:1816px;top:708px;height:97px"></div>

<div class="row" style="top:707px;left:0;width:1918px;color:#333;line-height:20px">
<span style="left:21px">Время</span>
<span style="right:1609px">Символ</span>
<span style="right:1500px">Тикет</span>
<span style="right:1408px">Тип</span>
<span style="right:1253px">Объем</span>
<span style="right:1098px">Цена</span>
<span style="right:943px">S / L</span>
<span style="right:788px">T / P</span>
<span style="right:671px">Время</span>
<span style="right:492px">Цена</span>
<span style="right:107px">Прибыль</span>
<span style="right:8px">Изменение</span>
</div>

<div class="row" style="top:725px;left:0;width:1918px"><span style="left:37px">2020.09.10 01:30:01</span><span style="right:1607px">eurjpy</span><span style="right:1498px">63851657</span><span style="right:1405px">buy</span><span style="right:1251px">0.1</span><span style="right:1096px">125.370</span><span style="right:645px">2020.09.10 14:20:00</span><span style="right:489px">125.629</span><span style="right:105px;color:#00f">24.40</span><span style="right:5px;color:#00f">0.21 %</span></div>
<div class="row" style="top:745px;left:0;width:1918px"><span style="left:37px">2020.09.10 08:17:24</span><span style="right:1607px">gbpusd</span><span style="right:1498px">63855867</span><span style="right:1405px">buy</span><span style="right:1251px">0.1</span><span style="right:1096px">1.29953</span><span style="right:645px">2020.09.10 15:09:07</span><span style="right:489px">1.29451</span><span style="right:105px;color:#f00">-50.20</span><span style="right:5px;color:#f00">-0.39 %</span></div>
<div class="row" style="top:765px;left:0;width:1918px"><span style="left:37px">2020.09.10 17:10:27</span><span style="right:1607px">gbpusd</span><span style="right:1498px">63886684</span><span style="right:1405px">sell</span><span style="right:1251px">0.1</span><span style="right:1096px">1.29351</span><span style="right:645px">2020.09.10 18:08:17</span><span style="right:489px">1.28892</span><span style="right:105px;color:#00f">45.90</span><span style="right:5px;color:#00f">0.35 %</span></div>
<div class="row" style="top:785px;left:0;width:1918px"><span style="left:37px">2020.09.10 06:30:12</span><span style="right:1607px">usdcad</span><span style="right:1498px">63854505</span><span style="right:1405px">sell</span><span style="right:1251px">0.2</span><span style="right:1096px">1.31552</span><span style="right:645px">2020.09.10 19:40:57</span><span style="right:489px">1.318555</span><span style="right:105px;color:#f00">-46.04</span><span style="right:5px;color:#f00">-0.23 %</span></div>
<div class="row" style="top:806px;left:0;width:1918px;font-weight:bold;font-size:12px"><span style="left:36px">Прибыль: -27.80</span><span style="left:139px">Кредит: 0.00</span><span style="left:218px">Депозит: 0.00</span><span style="left:302px">Снятие: 0.00</span><span style="left:379px">Баланс: -27.80</span><span style="right:105px;font-size:13px">-25.94</span></div>

<svg width="1918" height="834" viewBox="0 0 1918 834" style="pointer-events:none">
<defs>
<path id="doc" d="M.5 .5h11v10.5l-4 3.5h-7.5z"/>
</defs>
<g fill="#fff" stroke="#2a8ad0" stroke-width="1.5"><use href="#doc" x="18" y="728"/><use href="#doc" x="18" y="748"/></g>
<g fill="#fff" stroke="#f05a20" stroke-width="1.5"><use href="#doc" x="18" y="768"/><use href="#doc" x="18" y="788"/></g>
<path stroke="#2a8ad0" fill="none" d="M21 732h6M21 735h6M21 738h4M21 752h6M21 755h6M21 758h4"/>
<path stroke="#f05a20" fill="none" d="M21 772h6M21 775h6M21 778h4M21 792h6M21 795h6M21 798h4"/>
<circle cx="24" cy="816" r="5" fill="none" stroke="#444" stroke-width="1.2"/><path stroke="#333" d="M21 816h6"/>
<polygon points="1260,719 1268,719 1264,715" fill="#444"/>
</svg>
</body></html>
